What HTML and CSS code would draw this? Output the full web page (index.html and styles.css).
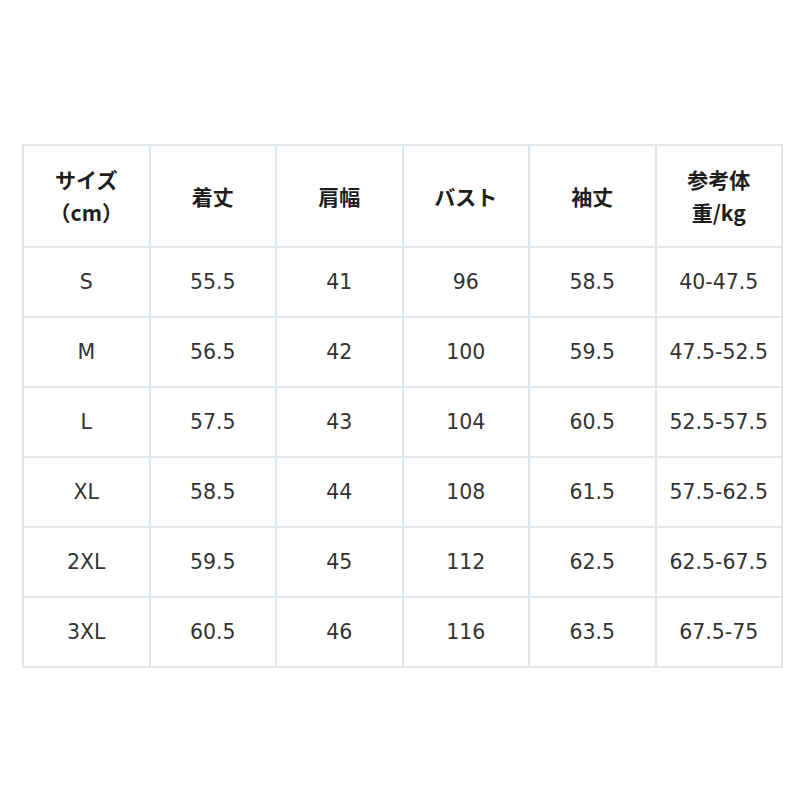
FILE: index.html
```html
<!DOCTYPE html>
<html lang="ja">
<head>
<meta charset="utf-8">
<link rel="stylesheet" href="styles.css">
</head>
<body>
<div class="page">
<table class="size-table">
<thead>
<tr><th>サイズ<br>（cm）</th><th>着丈</th><th>肩幅</th><th>バスト</th><th>袖丈</th><th>参考体<br>重/kg</th></tr>
</thead>
<tbody>
<tr><td>S</td><td>55.5</td><td>41</td><td>96</td><td>58.5</td><td>40-47.5</td></tr>
<tr><td>M</td><td>56.5</td><td>42</td><td>100</td><td>59.5</td><td>47.5-52.5</td></tr>
<tr><td>L</td><td>57.5</td><td>43</td><td>104</td><td>60.5</td><td>52.5-57.5</td></tr>
<tr><td>XL</td><td>58.5</td><td>44</td><td>108</td><td>61.5</td><td>57.5-62.5</td></tr>
<tr><td>2XL</td><td>59.5</td><td>45</td><td>112</td><td>62.5</td><td>62.5-67.5</td></tr>
<tr><td>3XL</td><td>60.5</td><td>46</td><td>116</td><td>63.5</td><td>67.5-75</td></tr>
</tbody>
</table>
</div>
</body>
</html>
```
FILE: styles.css
```css
html, body { margin: 0; padding: 0; background: #fff; }
.page { padding: 144px 18px 0 22px; }
.size-table {
  width: 761px;
  table-layout: fixed;
  border-collapse: collapse;
  border: 2px solid #dde3e8;
  font-family: "DejaVu Sans", "Noto Sans CJK JP", sans-serif;
  color: #333;
}
.size-table th, .size-table td {
  border: 2px solid #e1e6eb;
  text-align: center;
  vertical-align: middle;
  padding: 0;
}
.size-table th {
  height: 100px;
  font-family: "Noto Sans CJK JP", sans-serif;
  font-weight: bold;
  font-size: 21px;
  line-height: 33px;
  color: #1e1e1e;
}
.size-table td {
  height: 68px;
  font-size: 20.5px;
}
```
